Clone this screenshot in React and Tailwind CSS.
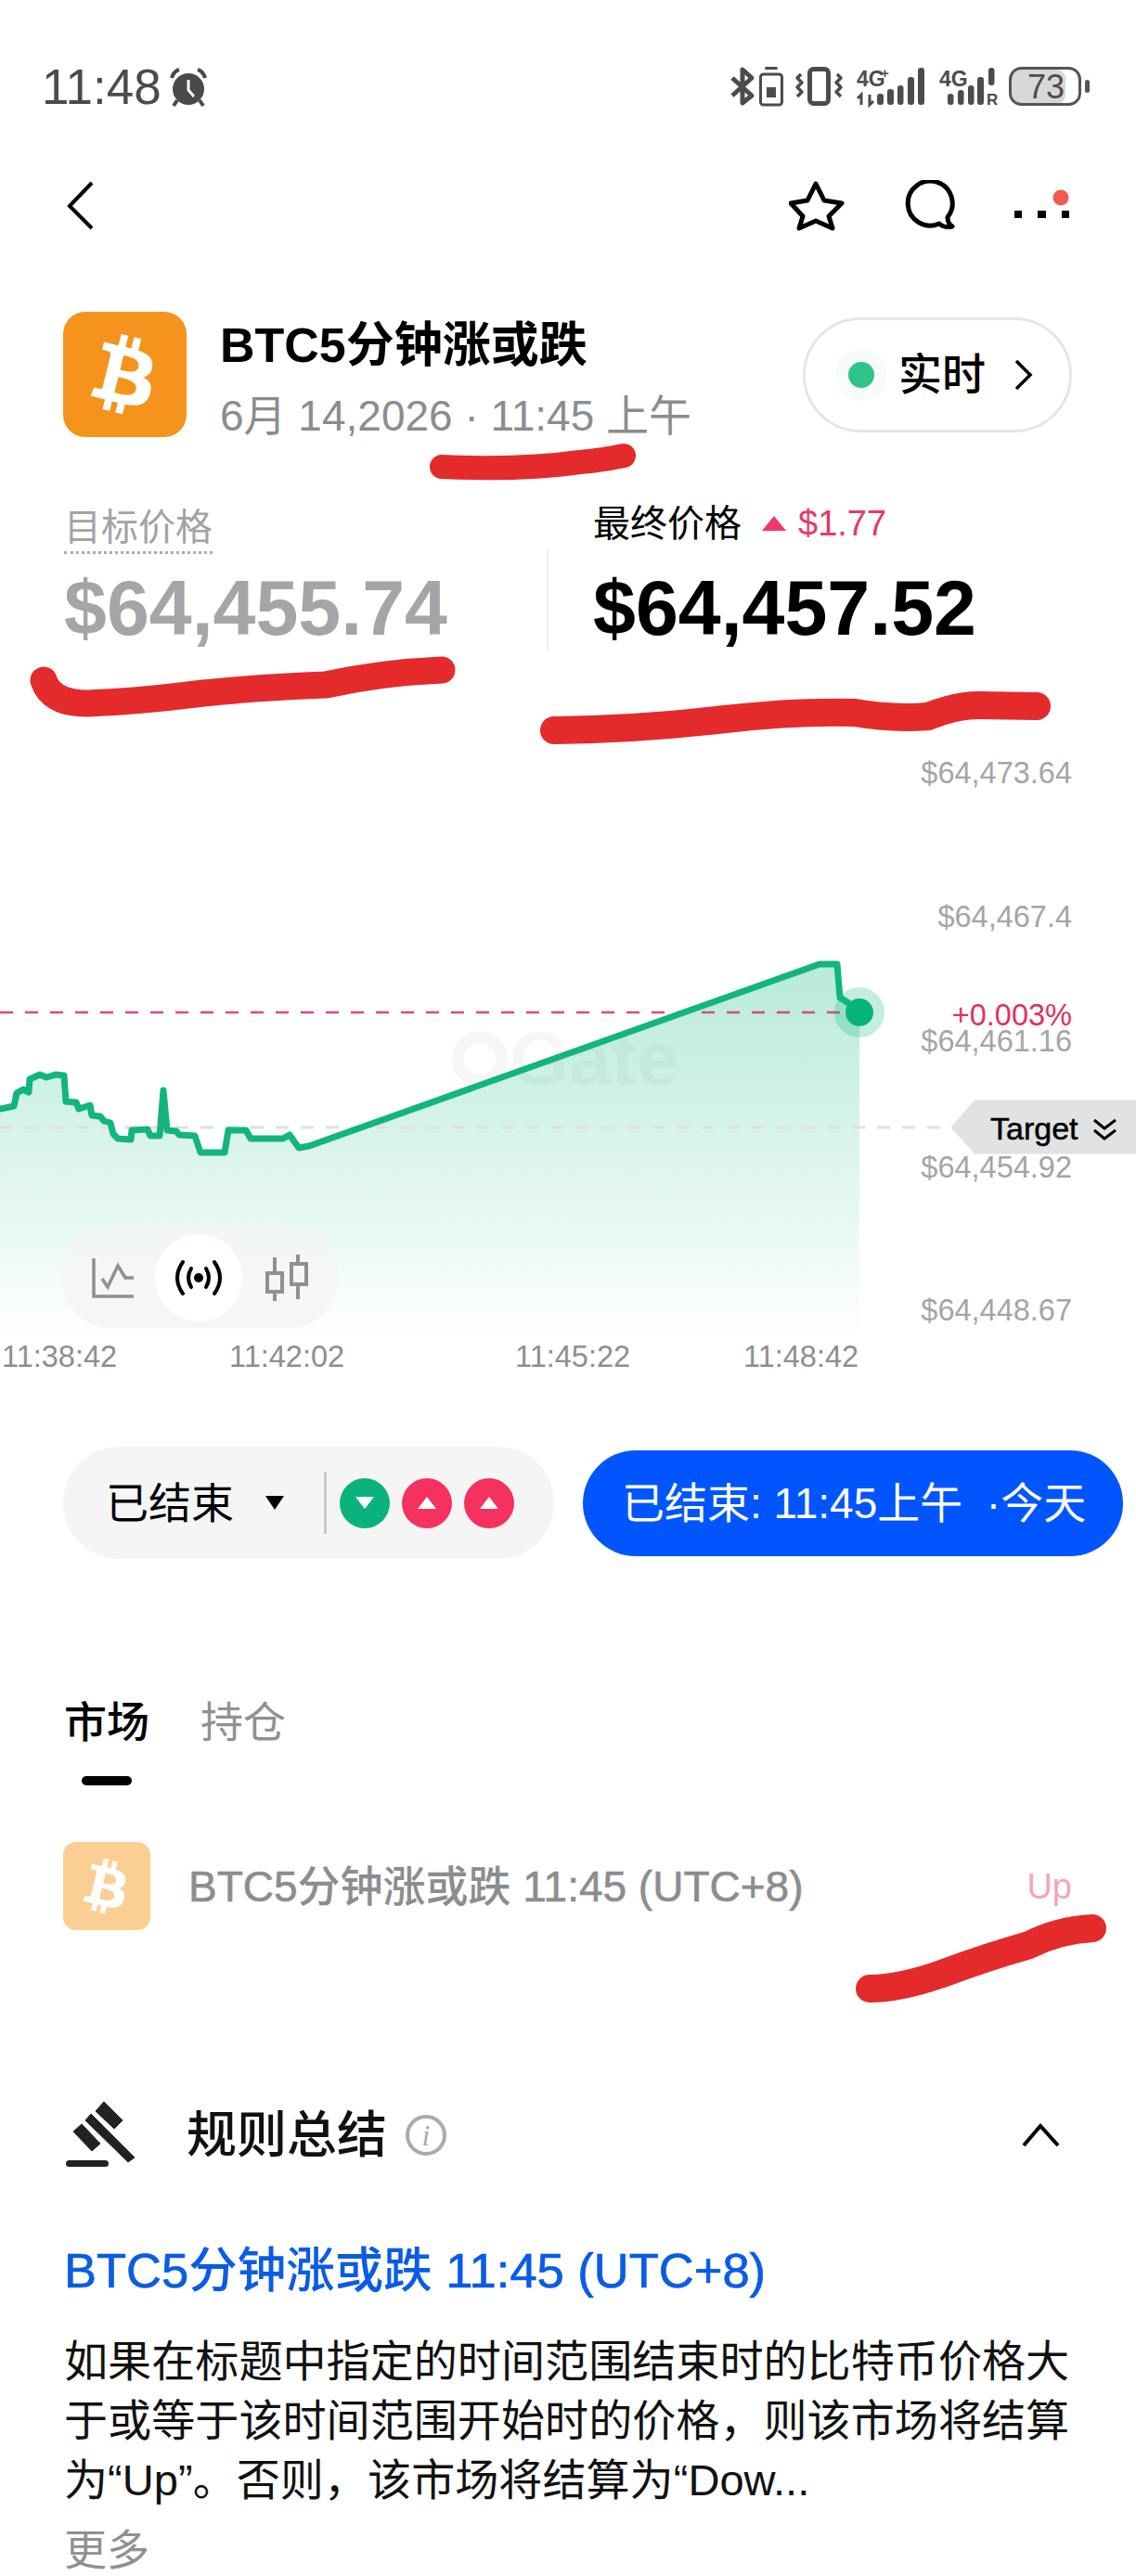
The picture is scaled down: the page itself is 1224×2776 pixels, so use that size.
import React from "react";
import { FaBtc } from "react-icons/fa";

// chart line, in page coordinates
const linePoints = [
  [0, 1195], [15, 1192], [18, 1178], [25, 1174], [31, 1177], [32, 1163], [43, 1158], [50, 1161],
  [60, 1158], [69, 1159], [71, 1187], [82, 1188], [85, 1195], [97, 1191], [99, 1202], [108, 1203],
  [112, 1208], [119, 1210], [122, 1222], [127, 1227], [141, 1228], [142, 1218], [159, 1217],
  [162, 1224], [172, 1224], [176, 1175], [180, 1218], [190, 1219], [193, 1223], [210, 1224],
  [216, 1242], [242, 1242], [246, 1218], [265, 1218], [270, 1227], [305, 1227], [312, 1223],
  [322, 1237], [333, 1235], [883, 1039], [902, 1039], [905, 1075], [913, 1080], [926, 1091],
];

const linePath = linePoints.map(([x, y], i) => `${i === 0 ? "M" : "L"}${x} ${y}`).join(" ");

const priceLabels = [
  { text: "$64,473.64", cls: "top-[116px]" },
  { text: "$64,467.4", cls: "top-[271px]" },
  { text: "$64,461.16", cls: "top-[405px]" },
  { text: "$64,454.92", cls: "top-[541px]" },
  { text: "$64,448.67", cls: "top-[695px]" },
];

const timeLabels = [
  { text: "11:38:42", cls: "left-[2px]" },
  { text: "11:42:02", cls: "left-[247px]" },
  { text: "11:45:22", cls: "left-[555px]" },
  { text: "11:48:42", cls: "left-[801px]" },
];

const bodyText =
  "如果在标题中指定的时间范围结束时的比特币价格大于或等于该时间范围开始时的价格\uFF0C则该市场将结算为“Up”。否则\uFF0C该市场将结算为“Dow...";

const StatusIcons = () => (
  <svg width="400" height="56" viewBox="780 66 400 56" fill="none">
    {/* bluetooth */}
    <path d="M789 84 L810 103 L800 111 L800 75 L810 84 L789 103" stroke="#4c4c4c" strokeWidth="5" strokeLinejoin="round" />
    {/* small battery */}
    <rect x="824" y="72" width="14" height="3" rx="1.5" fill="#4c4c4c" />
    <rect x="819.5" y="80" width="23" height="33" rx="3" stroke="#4c4c4c" strokeWidth="3" />
    <rect x="826" y="94" width="10" height="11" fill="#4c4c4c" />
    {/* vibrate */}
    <rect x="872.5" y="74.5" width="20" height="37" rx="4" stroke="#4c4c4c" strokeWidth="5" />
    <path d="M863 80 L859 84 L864 89 L859 94 L864 99 L859 104" stroke="#4c4c4c" strokeWidth="3.5" strokeLinejoin="round" />
    <path d="M902 80 L906 84 L901 89 L906 94 L901 99 L906 104" stroke="#4c4c4c" strokeWidth="3.5" strokeLinejoin="round" />
    {/* sim 1 */}
    <text x="923" y="93" fill="#4c4c4c" className="font-['Liberation_Sans'] text-[23px] font-bold">4G</text>
    <text x="949" y="84" fill="#4c4c4c" className="font-['Liberation_Sans'] text-[15px] font-bold">+</text>
    <path d="M928 113 V102 L924 106 M937 102 V113 L941 109" stroke="#4c4c4c" strokeWidth="3" />
    <rect x="945" y="101" width="7" height="12" rx="3" fill="#4c4c4c" />
    <rect x="956" y="96" width="7" height="17" rx="3" fill="#4c4c4c" />
    <rect x="967" y="92" width="6.5" height="21" rx="3" fill="#4c4c4c" />
    <rect x="978" y="83" width="7" height="30" rx="3" fill="#4c4c4c" />
    <rect x="989" y="73" width="7" height="40" rx="3" fill="#4c4c4c" />
    {/* sim 2 */}
    <text x="1012" y="93" fill="#4c4c4c" className="font-['Liberation_Sans'] text-[23px] font-bold">4G</text>
    <rect x="1021" y="101" width="6.5" height="12" rx="3" fill="#4c4c4c" />
    <rect x="1032" y="97" width="6.5" height="16" rx="3" fill="#4c4c4c" />
    <rect x="1043" y="92" width="6.5" height="21" rx="3" fill="#4c4c4c" />
    <rect x="1053" y="83" width="7" height="30" rx="3" fill="#4c4c4c" />
    <rect x="1065" y="73" width="6.5" height="19" rx="3" fill="#4c4c4c" />
    <text x="1063" y="113" fill="#4c4c4c" className="font-['Liberation_Sans'] text-[17px] font-bold">R</text>
    {/* battery */}
    <rect x="1090" y="75" width="58" height="37" rx="9" fill="#d8d8d8" />
    <rect x="1088.5" y="73.5" width="75" height="39" rx="12" stroke="#555555" strokeWidth="3" />
    <rect x="1169" y="86" width="5" height="14" rx="2.5" fill="#555555" />
    <text x="1127" y="106" fill="#4c4c4c" textAnchor="middle" className="font-['Liberation_Sans'] text-[36px]">73</text>
  </svg>
);

const AlarmIcon = () => (
  <svg width="42" height="44" viewBox="185 71 42 44" fill="none" className="ml-[8px]">
    <circle cx="206" cy="95" r="17" fill="#4a4a4a" />
    <path d="M206 85 V96 L212 103" stroke="#ffffff" strokeWidth="3" />
    <path d="M188 83 Q190 76 196 74 M224 83 Q222 76 216 74" stroke="#4a4a4a" strokeWidth="4" />
    <path d="M194 107 L190 113 M218 107 L222 113" stroke="#4a4a4a" strokeWidth="4" />
  </svg>
);

const NavIcons = () => (
  <div className="flex items-center">
    <svg width="60" height="56" viewBox="850 196 60 56" fill="none" className="mr-[64px]">
      <path
        d="M879 200 L888 218 L907 221 L893 235 L897 248 L879 240 L861 248 L865 235 L852 221 L870 218 Z"
        stroke="#000000"
        strokeWidth="5"
        strokeLinejoin="round"
      />
    </svg>
    <svg width="56" height="56" viewBox="974 196 56 56" fill="none" className="mr-[60px]">
      <path
        d="M1021 236 Q1021 243 1026 246 Q1017 248 1012 243 A24 24 0 1 1 1021 236 Z"
        stroke="#000000"
        strokeWidth="5"
        strokeLinejoin="round"
      />
    </svg>
    <svg width="64" height="36" viewBox="1090 196 64 36">
      <rect x="1093" y="219" width="8" height="8" fill="#000000" />
      <rect x="1118" y="219" width="9" height="8" fill="#000000" />
      <rect x="1144" y="219" width="8" height="8" fill="#000000" />
      <circle cx="1143" cy="205" r="8.5" fill="#f25a4f" />
    </svg>
  </div>
);

const ChartArea = () => (
  <svg width="1224" height="785" viewBox="0 703 1224 785" fill="none" className="absolute inset-0">
    <defs>
      <linearGradient id="areaFill" gradientUnits="userSpaceOnUse" x1="0" y1="1040" x2="0" y2="1445">
        <stop offset="0" stopColor="#10b981" stopOpacity="0.3" />
        <stop offset="1" stopColor="#10b981" stopOpacity="0" />
      </linearGradient>
    </defs>
    <path d={`${linePath} L926 1445 L0 1445 Z`} fill="url(#areaFill)" />
    <line x1="0" y1="1091" x2="906" y2="1091" stroke="#dc4a70" strokeWidth="2.5" strokeDasharray="14 13" />
    <line x1="0" y1="1215" x2="1016" y2="1215" stroke="#e0e0e0" strokeWidth="3" strokeDasharray="14 13" />
    <path d={linePath} stroke="#12b57f" strokeWidth="7" strokeLinejoin="round" strokeLinecap="round" />
    <circle cx="926" cy="1091" r="27" fill="#0fb67d" fillOpacity="0.25" />
    <circle cx="926" cy="1091" r="15" fill="#07b477" />
    {/* target tag */}
    <path d="M1025 1215 L1050 1186 H1224 V1243 H1050 Z" fill="#e0e2e4" stroke="#e0e2e4" strokeWidth="1" strokeLinejoin="round" />
    <path d="M1179 1207 L1190 1216 L1202 1207 M1179 1218 L1190 1227 L1202 1218" stroke="#000000" strokeWidth="3" />
  </svg>
);

const ChartModes = () => (
  <div className="absolute left-[68px] top-[620px] flex h-[108px] w-[295px] items-center rounded-[50px] bg-[#f4f5f6]/90">
    <svg width="48" height="46" viewBox="98 1355 48 46" fill="none" className="ml-[30px]">
      <path d="M101 1357 V1398 H144" stroke="#8e9094" strokeWidth="3.5" />
      <path d="M110 1379 L116 1388 L127 1365 L135 1378 H144" stroke="#8e9094" strokeWidth="3.5" />
    </svg>
    <div className="ml-[21px] flex h-[94px] w-[94px] items-center justify-center rounded-full bg-white">
      <svg width="54" height="40" viewBox="189 1357 54 40" fill="none">
        <circle cx="216" cy="1377" r="5" fill="#000000" />
        <path d="M208 1367 Q202 1377 208 1387 M224 1367 Q230 1377 224 1387" stroke="#000000" strokeWidth="4" strokeLinecap="round" />
        <path d="M199 1360 Q187 1377 199 1394 M233 1360 Q245 1377 233 1394" stroke="#000000" strokeWidth="4" strokeLinecap="round" />
      </svg>
    </div>
    <svg width="50" height="54" viewBox="286 1350 50 54" fill="none" className="ml-[23px]">
      <path d="M298 1355 V1372 M298 1392 V1402 M323 1352 V1362 M323 1384 V1400" stroke="#8e9094" strokeWidth="4" />
      <rect x="290" y="1372" width="16" height="20" stroke="#8e9094" strokeWidth="4" />
      <rect x="316" y="1362" width="16" height="22" stroke="#8e9094" strokeWidth="4" />
    </svg>
  </div>
);

const Chart = () => (
  <div className="relative h-[785px] w-full">
    <div className="absolute left-[487px] top-[398px] flex items-center text-[82px] font-bold leading-[80px] text-black/[0.035]">
      <span className="mr-[2px] h-[60px] w-[60px] rounded-full border-[13px] border-black/[0.035]" />
      <span>Gate</span>
    </div>
    <ChartArea />
    <ChartModes />
    {priceLabels.map((label) => (
      <div
        key={label.text}
        className={`absolute right-[69px] text-[32.5px] leading-[28px] text-[#a3a5a8] ${label.cls}`}
      >
        {label.text}
      </div>
    ))}
    <div className="absolute right-[69px] top-[377px] text-[32.5px] leading-[28px] text-[#e0315f]">+0.003%</div>
    <div className="absolute left-[1067px] top-[493px] text-[34px] leading-[40px] text-black [-webkit-text-stroke:0.5px_#000000]">Target</div>
    {timeLabels.map((label) => (
      <div
        key={label.text}
        className={`absolute top-[739px] text-[32.5px] leading-[40px] text-[#8c8f92] ${label.cls}`}
      >
        {label.text}
      </div>
    ))}
  </div>
);

const SideCircle = ({ up }) => (
  <div className={`flex h-[54px] w-[54px] items-center justify-center rounded-full ${up ? "bg-[#f5315f]" : "bg-[#0ab27d]"}`}>
    <svg width="20" height="13" viewBox="0 0 20 13">
      <path d={up ? "M10 0 L20 13 H0 Z" : "M0 0 H20 L10 13 Z"} fill="#ffffff" />
    </svg>
  </div>
);

const FilterRow = () => (
  <div className="mt-[79px] flex items-center pl-[68px]">
    <div className="flex h-[121px] w-[529px] items-center rounded-[60px] bg-[#f5f5f5] pl-[46px]">
      <span className="text-[46px] leading-[60px] text-black">已结束</span>
      <svg width="20" height="15" viewBox="0 0 20 15" className="ml-[34px]">
        <path d="M0 0 H20 L10 15 Z" fill="#000000" />
      </svg>
      <div className="ml-[43px] h-[67px] w-[3px] bg-[#c8c8c8]" />
      <div className="ml-[14px] flex gap-[13px]">
        <SideCircle />
        <SideCircle up />
        <SideCircle up />
      </div>
    </div>
    <div className="ml-[31px] flex h-[114px] w-[582px] items-center rounded-[57px] bg-[#0055ff] pl-[42px] text-[46px] leading-[60px] whitespace-pre text-white">
      {"已结束: 11:45上午  ·今天"}
    </div>
  </div>
);

const Tabs = () => (
  <div className="mt-[148px] pl-[69px]">
    <div className="flex gap-[55px] text-[46px] leading-[56px]">
      <span className="font-medium text-black">市场</span>
      <span className="text-[#8f9194]">持仓</span>
    </div>
    <div className="mt-[30px] ml-[19px] h-[10px] w-[54px] rounded-full bg-black" />
  </div>
);

const MarketRow = () => (
  <div className="mt-[61px] flex items-center pr-[69px] pl-[68px]">
    <div className="flex h-[95px] w-[94px] items-center justify-center rounded-[14px] bg-[#fbcf93]">
      <FaBtc className="h-[58px] w-[44px] rotate-[14deg] text-white" />
    </div>
    <span className="ml-[41px] text-[46px] font-medium leading-[56px] text-[#8b8d8f]">
      <span className="[-webkit-text-stroke:0.6px_#8b8d8f]">BTC5</span>分钟涨或跌
      <span className="[-webkit-text-stroke:0.6px_#8b8d8f]"> 11:45 (UTC+8)</span>
    </span>
    <span className="ml-auto text-[38px] leading-[50px] text-[#f2a6bb]">Up</span>
  </div>
);

const Rules = () => (
  <div className="mt-[183px] px-[69px]">
    <div className="flex items-center">
      <svg width="80" height="76" viewBox="74 2270 80 76" className="shrink-0">
        <path d="M117 2272 L137 2292 L128 2301 L108 2282 Z" fill="#222222" stroke="#222222" strokeWidth="1" strokeLinejoin="round" />
        <path d="M103 2285 L150 2332 L143 2337 L97 2292 Z" fill="#222222" stroke="#222222" strokeWidth="1" strokeLinejoin="round" />
        <path d="M93 2296 L113 2317 L104 2325 L84 2304 Z" fill="#222222" stroke="#222222" strokeWidth="1" strokeLinejoin="round" />
        <rect x="76" y="2335" width="46" height="7" rx="3.5" fill="#222222" />
      </svg>
      <span className="ml-[52px] text-[54px] font-medium leading-[64px] text-[#111111]">规则总结</span>
      <div className="ml-[20px] flex h-[44px] w-[44px] items-center justify-center rounded-full border-[4px] border-[#aaaaaa] font-['Liberation_Serif',serif] text-[32px] italic leading-none text-[#aaaaaa]">
        i
      </div>
      <svg width="42" height="26" viewBox="1102 2285 42 26" fill="none" className="ml-auto mr-[12px]">
        <path d="M1104 2309 L1122 2288 L1141 2309" stroke="#000000" strokeWidth="4" />
      </svg>
    </div>
    <div className="mt-[78px] text-[52.5px] font-medium leading-[60px] text-[#0a5ce6]">
      <span className="[-webkit-text-stroke:0.7px_#0a5ce6]">BTC5</span>分钟涨或跌
      <span className="[-webkit-text-stroke:0.7px_#0a5ce6]"> 11:45 (UTC+8)</span>
    </div>
    <p className="mt-[36px] w-[1095px] text-[47.1px] leading-[64px] text-[#111111]">{bodyText}</p>
    <div className="mt-[15px] text-[46px] leading-[56px] text-[#8e9093]">更多</div>
  </div>
);

// the red marker strokes drawn over the screenshot
const Scribbles = () => (
  <svg width="1224" height="2776" viewBox="0 0 1224 2776" fill="none" className="pointer-events-none absolute inset-0">
    <g stroke="#e42a2b" strokeLinecap="round" strokeLinejoin="round">
      <path d="M476 503 Q560 507 625 498 Q650 496 672 491" strokeWidth="26" />
      <path d="M47 733 Q55 758 94 758 Q150 756 219 747 Q290 740 351 738 Q410 725 476 722" strokeWidth="29" />
      <path d="M597 787 Q690 786 781 775 Q860 766 921 768 Q960 775 1000 772 Q1030 760 1054 760 L1117 761" strokeWidth="30" />
      <path d="M937 2143 Q970 2143 1015 2127 Q1060 2110 1109 2096 Q1140 2080 1177 2078" strokeWidth="30" />
    </g>
  </svg>
);

export default function App() {
  return (
    <div className="relative flex h-[2776px] w-[1224px] flex-col overflow-hidden bg-white font-['Liberation_Sans','Noto_Sans_CJK_SC',sans-serif]">
      {/* status bar */}
      <div className="mt-[66px] flex h-[56px] items-center justify-between pr-[44px] pl-[45px]">
        <div className="flex items-center text-[53px] leading-[56px] text-[#4b4b4b]">
          11:48
          <AlarmIcon />
        </div>
        <StatusIcons />
      </div>

      {/* nav */}
      <div className="mt-[66px] flex h-[68px] items-center justify-between pr-[70px] pl-[72px]">
        <svg width="30" height="56" viewBox="72 195 30 56" fill="none">
          <path d="M99 198 L75 223 L99 247" stroke="#000000" strokeWidth="4" />
        </svg>
        <NavIcons />
      </div>

      {/* title */}
      <div className="mt-[81px] flex h-[135px] items-center pr-[69px] pl-[68px]">
        <div className="flex h-[135px] w-[133px] shrink-0 items-center justify-center rounded-[24px] bg-[#f6931c]">
          <FaBtc className="h-[84px] w-[64px] rotate-[14deg] text-white" />
        </div>
        <div className="mt-[10px] ml-[36px]">
          <div className="text-[52px] font-bold leading-[62px] text-black">BTC5分钟涨或跌</div>
          <div className="mt-[16px] text-[46px] leading-[58px] whitespace-nowrap text-[#8a8d90]">6月 14,2026 · 11:45 上午</div>
        </div>
        <div className="ml-auto flex h-[124px] w-[290px] items-center rounded-[62px] border-[3px] border-[#e5e5e5] pl-[32px]">
          <div className="flex h-[56px] w-[56px] items-center justify-center rounded-full bg-[#f7fcfa]">
            <div className="h-[28px] w-[28px] rounded-full bg-[#2fc38a]" />
          </div>
          <span className="ml-[12px] text-[47px] font-medium leading-[60px] text-black">实时</span>
          <svg width="22" height="36" viewBox="0 0 22 36" fill="none" className="ml-[30px]">
            <path d="M3 3 L18 18 L3 33" stroke="#000000" strokeWidth="3.5" />
          </svg>
        </div>
      </div>

      {/* prices */}
      <div className="mt-[73px] flex h-[160px] pl-[69px]">
        <div className="w-[520px]">
          <div className="mt-[2px] inline-block border-b-[3px] border-dotted border-[#a9abae] pb-[4px] text-[40px] leading-[44px] text-[#a0a3a6]">目标价格</div>
          <div className="mt-[14px] text-[82.5px] font-bold leading-[88px] text-[#a3a6a9]">$64,455.74</div>
        </div>
        <div className="mt-[48px] h-[110px] w-[2px] bg-[#f0f0f0]" />
        <div className="ml-[48px]">
          <div className="-mt-[2px] flex h-[44px] items-center">
            <span className="text-[40px] leading-[44px] text-black">最终价格</span>
            <svg width="26" height="16" viewBox="0 0 26 16" className="ml-[22px]">
              <path d="M13 0 L26 16 H0 Z" fill="#f0386b" />
            </svg>
            <span className="ml-[13px] text-[38px] leading-[44px] text-[#e8386a]">$1.77</span>
          </div>
          <div className="mt-[25px] text-[82.5px] font-bold leading-[88px] text-black">$64,457.52</div>
        </div>
      </div>

      <Chart />
      <FilterRow />
      <Tabs />
      <MarketRow />
      <Rules />
      <Scribbles />
    </div>
  );
}
